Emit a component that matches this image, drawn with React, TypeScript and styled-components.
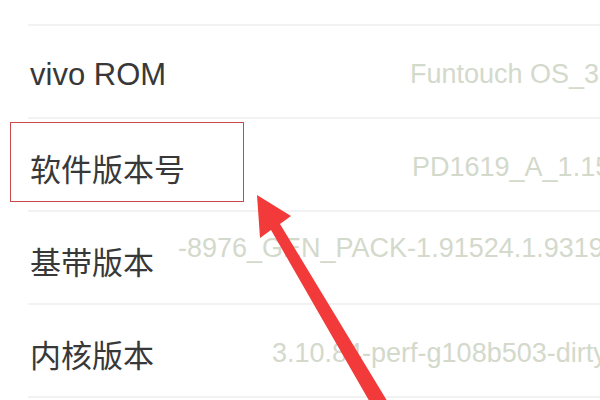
import styled, { createGlobalStyle } from "styled-components";

interface Info {
  label: string;
  value: string;
  start: number;
  lift?: number;
}

const rows: Info[] = [
  { label: "vivo ROM", value: "Funtouch OS_3.1", start: 410 },
  { label: "软件版本号", value: "PD1619_A_1.15.5", start: 412 },
  {
    label: "基带版本",
    value: "-8976_GEN_PACK-1.91524.1.93194.1",
    start: 178,
    lift: 24,
  },
  { label: "内核版本", value: "3.10.84-perf-g108b503-dirty", start: 272 },
  { label: "", value: "", start: 0 },
];

const LIST_LEFT = 28;

function App() {
  return (
    <Page>
      <GlobalStyle />
      <List>
        {rows.map((row, i) => (
          <Row key={i}>
            <Label>{row.label}</Label>
            <Value $offset={row.start - LIST_LEFT} $lift={row.lift ?? 0}>
              {row.value}
            </Value>
          </Row>
        ))}
      </List>

      <Highlight />
      <Arrow viewBox="0 0 600 400" width="600" height="400">
        <polygon
          points="257,195 291,216 280,224 389,404 371,404 271,230 260,238"
          fill="#f23a3a"
        />
      </Arrow>
    </Page>
  );
}

export default App;

const GlobalStyle = createGlobalStyle`
  html, body {
    margin: 0;
    padding: 0;
    background: #fff;
    overflow: hidden;
  }
`;

const Page = styled.div`
  position: relative;
  width: 600px;
  height: 400px;
  overflow: hidden;
  background: #fff;
  font-family: "Liberation Sans", "Noto Sans CJK SC", sans-serif;
`;

const List = styled.ul`
  margin: 24px 0 0 ${LIST_LEFT}px;
  padding: 0;
  list-style: none;
`;

const Row = styled.li`
  display: grid;
  align-items: center;
  height: 93px;
  box-sizing: border-box;
  border-top: 2px solid #f2f2f2;
  padding-top: 6px;

  & > * {
    grid-area: 1 / 1;
  }
`;

const Label = styled.div`
  padding-left: 2px;
  color: #383838;
  font-size: 31px;
  white-space: nowrap;
`;

const Value = styled.div<{ $offset: number; $lift: number }>`
  padding-left: ${(p) => p.$offset}px;
  margin-bottom: ${(p) => p.$lift}px;
  color: #d3d9cb;
  font-size: 27px;
  white-space: nowrap;
  overflow: hidden;
`;

const Highlight = styled.div`
  position: absolute;
  left: 10px;
  top: 122px;
  width: 234px;
  height: 80px;
  box-sizing: border-box;
  border: 1.5px solid #c8494c;
  pointer-events: none;
`;

const Arrow = styled.svg`
  position: absolute;
  left: 0;
  top: 0;
  pointer-events: none;
`;
